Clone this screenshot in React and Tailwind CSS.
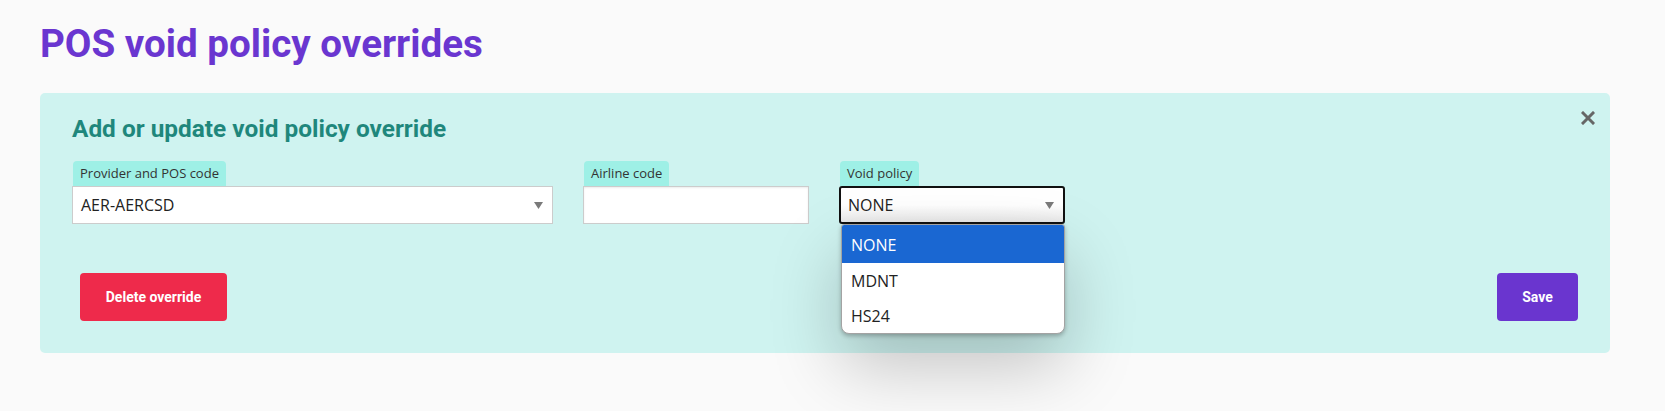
import React from "react";

const sans = { fontFamily: "Roboto, 'Liberation Sans', sans-serif" };

const FieldLabel = ({ children }) => (
  <div className="ml-px inline-flex h-[25px] items-center rounded-t-[4px] bg-[#9ef0e6] px-[7px] text-[13px] text-[#333] font-['Open_Sans',sans-serif]">
    {children}
  </div>
);

const Caret = () => (
  <svg width="9" height="7" viewBox="0 0 9 7" className="shrink-0">
    <path d="M0 0h9L4.5 7z" fill="#7a7a7a" />
  </svg>
);

const policies = ["NONE", "MDNT", "HS24"];

export default function App() {
  return (
    <div className="min-h-screen bg-[#fafafa] pt-[25px] pr-[55px] pl-10 font-['Open_Sans',sans-serif]">
      <h1 style={sans} className="text-[38.6px] leading-none font-bold text-[#6a36d0]">
        POS void policy overrides
      </h1>

      <div className="relative mt-[29px] rounded-[5px] bg-[#cff3f0] px-8 pt-6 pb-8">
        <button className="absolute top-[18px] right-[15px] text-[#666]">
          <svg width="14" height="14" viewBox="0 0 14 14">
            <path d="M2 2l10 10M12 2L2 12" stroke="#666" strokeWidth="3" strokeLinecap="square" />
          </svg>
        </button>

        <h2 style={sans} className="text-[24.4px] leading-none font-bold text-[#1f877c]">
          Add or update void policy override
        </h2>

        <div className="mt-[20px] flex gap-[30px]">
          <div className="flex w-[481px] flex-col items-start">
            <FieldLabel>Provider and POS code</FieldLabel>
            <div className="flex h-[38px] w-full items-center justify-between border border-[#cccccc] bg-white pr-[9px] pl-2 text-[16px] text-[#222]">
              <span>AER-AERCSD</span>
              <Caret />
            </div>
          </div>

          <div className="flex w-[226px] flex-col items-start">
            <FieldLabel>Airline code</FieldLabel>
            <input className="h-[38px] w-full border border-[#cccccc] bg-white shadow-[inset_0_1px_2px_rgba(0,0,0,0.08)] outline-none" />
          </div>

          <div className="relative flex w-[226px] flex-col items-start">
            <FieldLabel>Void policy</FieldLabel>
            <div className="flex h-[38px] w-full items-center justify-between rounded-[3px] border-2 border-[#111] bg-[linear-gradient(to_bottom,#ffffff_50%,#e8e8e8)] pr-[9px] pl-[7px] text-[16px] text-[#222]">
              <span>NONE</span>
              <Caret />
            </div>

            {/* open option list */}
            <ul className="absolute top-[63px] left-[2px] z-10 w-[224px] overflow-hidden rounded-t-[3px] rounded-b-[8px] border border-[#a3a3a3] bg-white text-[16px] shadow-[0_2px_4px_rgba(0,0,0,0.25),0_32px_70px_rgba(0,0,0,0.22)]">
              {policies.map((p, i) => (
                <li
                  key={p}
                  className={
                    "flex items-center px-[9px] pt-px " +
                    (i === 0 ? "h-[38px] bg-[#1a67d2] text-white" : "h-[35px] text-[#222]")
                  }
                >
                  {p}
                </li>
              ))}
            </ul>
          </div>
        </div>

        <div className="mt-[49px] flex items-center justify-between">
          <button
            style={sans}
            className="ml-2 h-[48px] w-[147px] rounded-[4px] bg-[#ee2a4b] text-[14px] font-bold text-white"
          >
            Delete override
          </button>
          <button
            style={sans}
            className="h-[48px] w-[81px] rounded-[4px] bg-[#6a35cf] text-[14px] font-bold text-white"
          >
            Save
          </button>
        </div>
      </div>
    </div>
  );
}
